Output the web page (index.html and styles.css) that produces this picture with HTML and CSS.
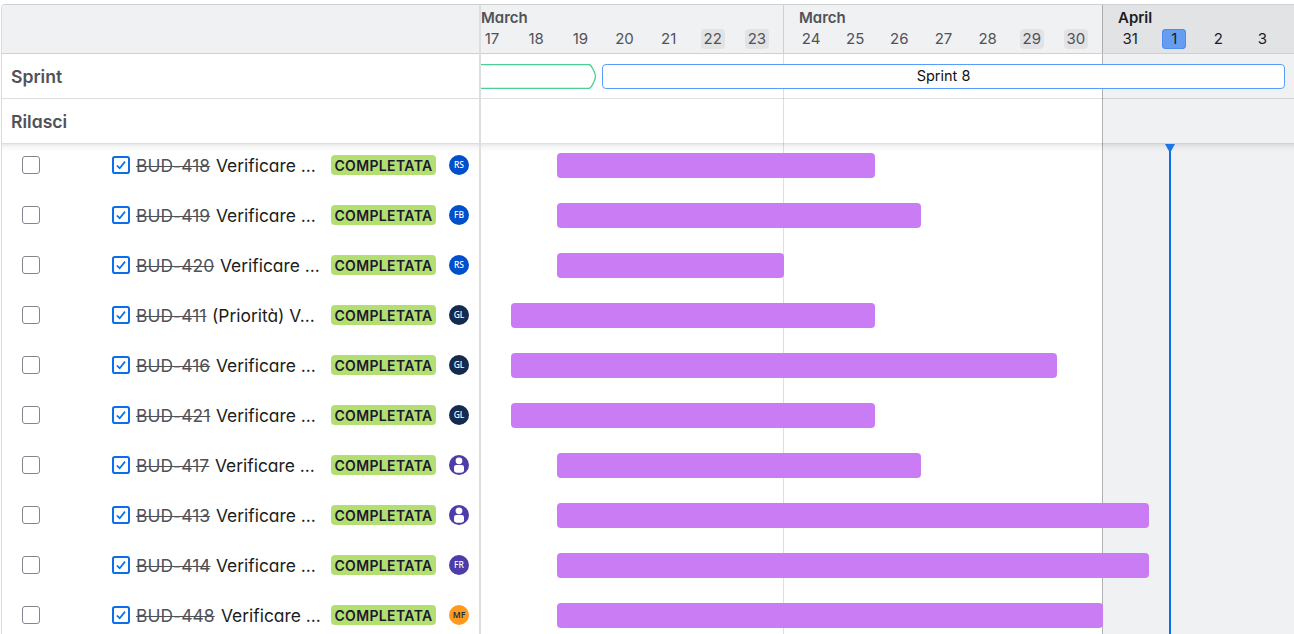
FILE: index.html
```
<!DOCTYPE html>
<html lang="it">
<head>
<meta charset="utf-8">
<title>Timeline</title>
<link rel="stylesheet" href="styles.css">
</head>
<body>
<svg class="defs" aria-hidden="true">
  <symbol id="task" viewBox="0 0 18 18"><rect x="1" y="1" width="16" height="16" rx="1.8" fill="#fff" stroke="#0c6eed" stroke-width="2"/><path d="M4.8 9.5 7.7 12.2 13 5.6" fill="none" stroke="#0c6eed" stroke-width="1.7"/></symbol>
  <symbol id="person" viewBox="0 0 20 20"><circle cx="10" cy="5.8" r="3.4" fill="#fff"/><path d="M5 12.2q0-2.2 2.2-2.2h5.6q2.2 0 2.2 2.2v3.3q0 2.3-5 2.3t-5-2.3z" fill="#fff"/></symbol>
</svg>
<main class="timeline">
  <section class="list">
    <div class="list-head"></div>
    <div class="label">Sprint</div>
    <div class="label">Rilasci</div>
    <div class="issues">
      <div class="issue"><i class="check"></i><svg class="task"><use href="#task"/></svg><p class="name"><s style="width:75px">BUD-418</s><span>Verificare ...</span></p><b class="status">COMPLETATA</b><span class="avatar blue">RS</span></div>
      <div class="issue"><i class="check"></i><svg class="task"><use href="#task"/></svg><p class="name"><s style="width:75px">BUD-419</s><span>Verificare ...</span></p><b class="status">COMPLETATA</b><span class="avatar blue">FB</span></div>
      <div class="issue"><i class="check"></i><svg class="task"><use href="#task"/></svg><p class="name"><s style="width:79px">BUD-420</s><span>Verificare ...</span></p><b class="status">COMPLETATA</b><span class="avatar blue">RS</span></div>
      <div class="issue"><i class="check"></i><svg class="task"><use href="#task"/></svg><p class="name"><s style="width:71px">BUD-411</s><span>(Priorità) V...</span></p><b class="status">COMPLETATA</b><span class="avatar navy">GL</span></div>
      <div class="issue"><i class="check"></i><svg class="task"><use href="#task"/></svg><p class="name"><s style="width:75px">BUD-416</s><span>Verificare ...</span></p><b class="status">COMPLETATA</b><span class="avatar navy">GL</span></div>
      <div class="issue"><i class="check"></i><svg class="task"><use href="#task"/></svg><p class="name"><s style="width:75px">BUD-421</s><span>Verificare ...</span></p><b class="status">COMPLETATA</b><span class="avatar navy">GL</span></div>
      <div class="issue"><i class="check"></i><svg class="task"><use href="#task"/></svg><p class="name"><s style="width:74px">BUD-417</s><span>Verificare ...</span></p><b class="status">COMPLETATA</b><span class="avatar violet"><svg class="person"><use href="#person"/></svg></span></div>
      <div class="issue"><i class="check"></i><svg class="task"><use href="#task"/></svg><p class="name"><s style="width:75px">BUD-413</s><span>Verificare ...</span></p><b class="status">COMPLETATA</b><span class="avatar violet"><svg class="person"><use href="#person"/></svg></span></div>
      <div class="issue"><i class="check"></i><svg class="task"><use href="#task"/></svg><p class="name"><s style="width:75px">BUD-414</s><span>Verificare ...</span></p><b class="status">COMPLETATA</b><span class="avatar violet">FR</span></div>
      <div class="issue"><i class="check"></i><svg class="task"><use href="#task"/></svg><p class="name"><s style="width:80px">BUD-448</s><span>Verificare ...</span></p><b class="status">COMPLETATA</b><span class="avatar orange">MF</span></div>
    </div>
  </section>
  <section class="chart">
    <div class="backdrop"></div>
    <div class="weeks">
      <div class="week first"><h3>March</h3><div class="days"><span>17</span><span>18</span><span>19</span><span>20</span><span>21</span><span class="off">22</span><span class="off">23</span></div></div>
      <div class="week"><h3>March</h3><div class="days"><span>24</span><span>25</span><span>26</span><span>27</span><span>28</span><span class="off">29</span><span class="off">30</span></div></div>
      <div class="week current"><h3>April</h3><div class="days"><span>31</span><span class="today">1</span><span>2</span><span>3</span></div></div>
    </div>
    <div class="lane sprints">
      <svg class="sprint-done" viewBox="0 0 116 25"><path d="M-2 .5H107.500q2 0 3 2.200Q114.400 9 114.400 12.500T110.500 22.300q-1 2.200-3 2.200H-2z" fill="#fff" stroke="#4bce97" stroke-width="1.300"/></svg>
      <div class="sprint">Sprint 8</div>
    </div>
    <div class="lane"></div>
    <div class="bars">
      <div class="track"><div class="bar" style="margin-left:76px;width:318px"></div></div>
      <div class="track"><div class="bar" style="margin-left:76px;width:364px"></div></div>
      <div class="track"><div class="bar" style="margin-left:76px;width:227px"></div></div>
      <div class="track"><div class="bar" style="margin-left:30px;width:364px"></div></div>
      <div class="track"><div class="bar" style="margin-left:30px;width:546px"></div></div>
      <div class="track"><div class="bar" style="margin-left:30px;width:364px"></div></div>
      <div class="track"><div class="bar" style="margin-left:76px;width:364px"></div></div>
      <div class="track"><div class="bar" style="margin-left:76px;width:592px"></div></div>
      <div class="track"><div class="bar" style="margin-left:76px;width:592px"></div></div>
      <div class="track"><div class="bar" style="margin-left:76px;width:546px"></div></div>
      <div class="now"></div>
    </div>
  </section>
</main>
</body>
</html>
```
FILE: styles.css
```
* { box-sizing: border-box; }
body { margin: 0; height: 634px; overflow: hidden; background: #fff; color: #101214; font-family: Inter, sans-serif; font-feature-settings: "cv11"; }
h3, p { margin: 0; }
.defs { position: absolute; width: 0; height: 0; }
.timeline { display: flex; height: 630px; margin: 4px 0 0 1px; border-top: 1px solid #cfd0d2; border-left: 1px solid #d9dadc; border-top-left-radius: 4px; overflow: hidden; }
.list { width: 479px; flex: none; border-right: 2px solid #dddee0; }
.list-head { height: 49px; background: #eff1f3; border-bottom: 1px solid #cfd0d2; }
.label { height: 45px; padding-left: 9px; border-bottom: 1px solid #dddee0; font-size: 17.600px; font-weight: 600; line-height: 45px; color: #505258; }
.issues, .bars { height: 490px; overflow: hidden; background-image: linear-gradient(#00000018, #00000008 3px, #0000 8px); background-size: 100% 8px; background-repeat: no-repeat; }
.issue { display: flex; align-items: center; height: 50px; padding-left: 20px; }
.issue:first-child, .track:first-child { margin-top: -4px; }
.check { width: 18px; height: 18px; border: 1px solid #85848f; border-radius: 3px; background: #fff; }
.task { width: 18px; height: 18px; margin: 0 6px 0 72px; }
.name { display: flex; width: 195px; font-size: 17.400px; line-height: 24px; padding-top: 2px; white-space: pre; color: #1c1d20; }
.name s { flex: none; letter-spacing: .08px; color: #505258; text-decoration-thickness: 1px; margin-right: 5px; }
.status { width: 105px; height: 20px; border-radius: 4px; background: #b3df72; text-align: center; font-size: 14px; font-weight: 600; line-height: 21px; letter-spacing: .35px; color: #1c1830; }
.avatar { position: relative; width: 20px; height: 20px; margin-left: 13px; border-radius: 50%; color: #fff; font: 500 8.500px/20px "Noto Sans", sans-serif; text-align: center; }
.person { display: block; width: 20px; height: 20px; }
.blue { background: #0050cc; }
.navy { background: #142a4e; }
.violet { background: #4c3da8; }
.orange { background: #ff991f; color: #172b4d; font-weight: 600; }
.chart { position: relative; flex: 1; overflow: hidden; }
.backdrop { position: absolute; z-index: -1; inset: 0; background: linear-gradient(90deg, #0000 302px, #dddee0 302px 303px, #0000 303px 621px, #b0b2b5 621px 622px, #eff1f3 622px); }
.weeks { display: flex; height: 49px; border-bottom: 1px solid #cfd0d2; background: #eff1f3; }
.week { flex: none; width: 319px; height: 48px; padding: 3px 4px 0 5px; border-right: 1px solid #cfd0d2; color: #505258; }
.week.first { margin-left: -16px; }
.week:nth-child(2) { border-color: #a9abae; }
.week.current { background: #e2e3e5; color: #1c1d20; border: 0; padding-right: 5px; }
.week h3 { height: 20px; padding-left: 10px; font-size: 15px; font-weight: 600; line-height: 20px; }
.week.first h3 { padding-left: 11px; }
.days { display: grid; grid-template-columns: repeat(7, 1fr); justify-items: center; font-size: 15px; line-height: 20px; margin-top: 1px; }
.days span { width: 24px; height: 20px; border-radius: 4px; text-align: center; }
.days .off { background: #e2e3e5; }
.days .today { background: #669df1; box-shadow: inset 0 0 0 1px #4b8df0; }
.lane { height: 45px; border-bottom: 1px solid #0000001f; }
.sprints { display: flex; align-items: flex-start; gap: 5px; padding-top: 10px; }
.sprint-done { flex: none; width: 116px; height: 25px; }
.sprint { width: 683px; height: 25px; border: 1px solid #579dff; border-radius: 4px; background: #fff; text-align: center; font-size: 14.500px; line-height: 22px; }
.bars { position: relative; }
.track { height: 50px; padding-top: 13px; }
.bar { height: 25px; border-radius: 4px; background: #c97cf4; }
.now { position: absolute; left: 688px; top: 0; width: 2px; height: 490px; background: #0c6eed; }
.now::before { content: ""; position: absolute; left: -4px; top: 0; border: 5px solid transparent; border-top: 9px solid #1d73e8; border-bottom: 0; }
```
